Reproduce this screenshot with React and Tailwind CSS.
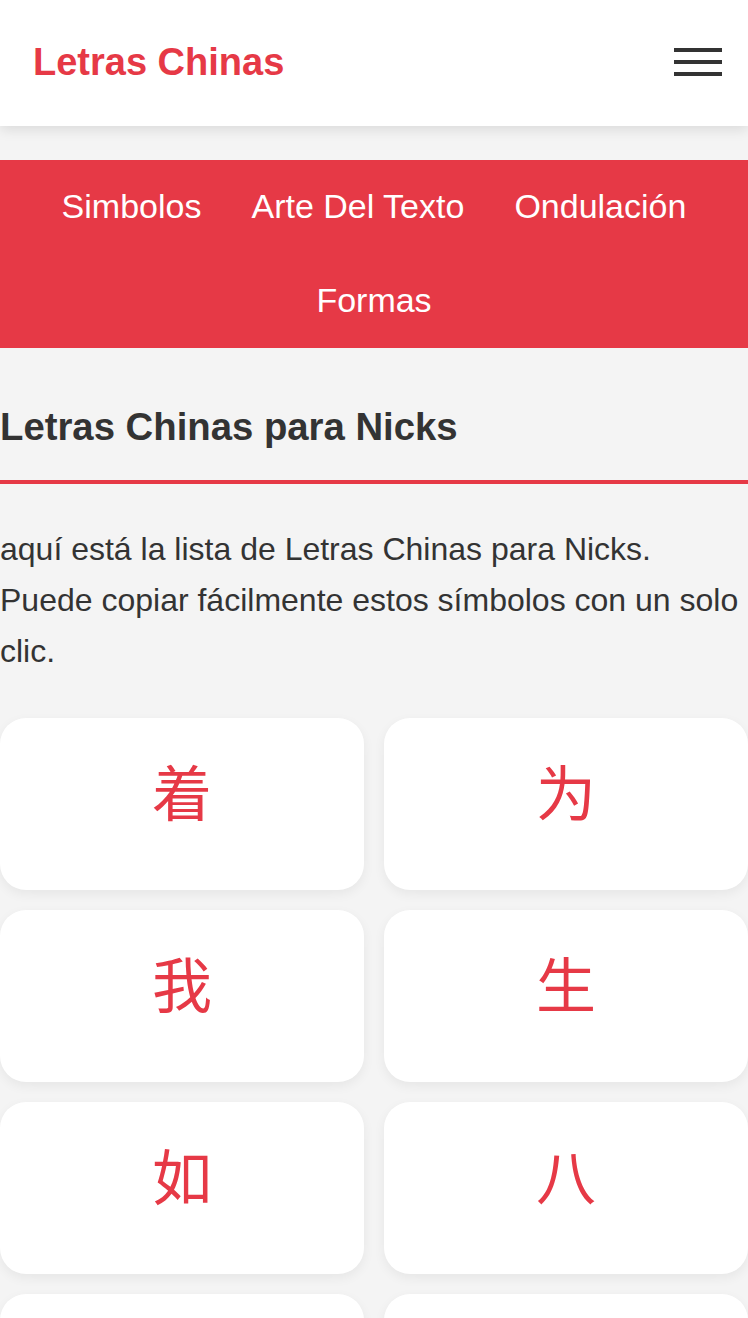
export default function App() {
  const chars = ["着", "为", "我", "生", "如", "八", "人", "大", "中", "天"];
  const links = ["Simbolos", "Arte Del Texto", "Ondulación", "Formas"];
  return (
    <div className="min-h-screen bg-[#f4f4f4] text-[#333]" style={{ fontFamily: '"Liberation Sans", Arial, sans-serif' }}>
      <header className="h-[126px] bg-white flex items-center justify-between pl-[33px] pr-[26px] pb-[2px] shadow-[0_4px_12px_rgba(0,0,0,0.1)] relative z-10">
        <div className="text-[38px] font-bold text-[#e63946] leading-none">Letras Chinas</div>
        <button className="flex flex-col gap-[8px] w-[48px]" aria-label="menu">
          <span className="block h-[4px] w-full bg-[#333]"></span>
          <span className="block h-[4px] w-full bg-[#333]"></span>
          <span className="block h-[4px] w-full bg-[#333]"></span>
        </button>
      </header>
      <nav className="mt-[34px] bg-[#e63946] flex flex-wrap justify-center">
        {links.map((l) => (
          <a key={l} className="h-[94px] flex items-center px-[25px] pb-[2px] text-white text-[34px]">{l}</a>
        ))}
      </nav>
      <main>
        <h1 className="mt-[56px] text-[38.3px] font-bold leading-[1.2] pb-[30px] border-b-4 border-[#e63946]">
          Letras Chinas para Nicks
        </h1>
        <p className="mt-[40px] text-[32px] leading-[51px]">
          aquí está la lista de Letras Chinas para Nicks. Puede copiar fácilmente estos símbolos con un solo clic.
        </p>
        <div className="mt-[41px] grid grid-cols-2 gap-[20px] pb-[20px]">
          {chars.map((c, i) => (
            <div
              key={i}
              className="h-[172px] bg-white rounded-[26px] shadow-[0_4px_12px_rgba(0,0,0,0.06)] flex items-center justify-center pb-[28px]"
            >
              <span className="text-[60px] leading-none text-[#e63946]" style={{ fontFamily: '"Noto Sans CJK SC", sans-serif' }}>
                {c}
              </span>
            </div>
          ))}
        </div>
      </main>
    </div>
  );
}
